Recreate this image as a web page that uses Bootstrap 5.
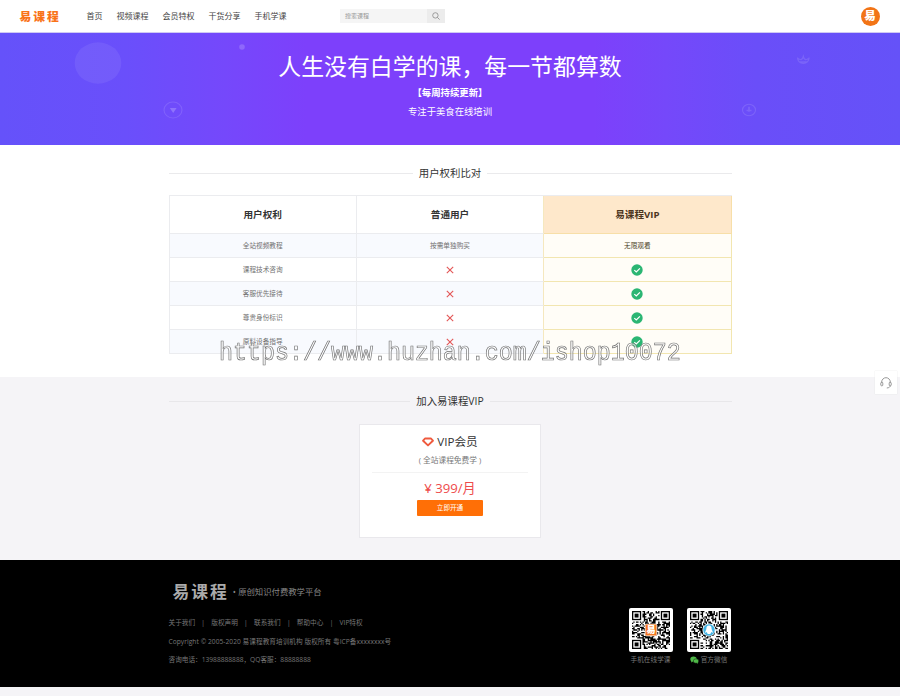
<!DOCTYPE html>
<html lang="zh-CN">
<head>
<meta charset="utf-8">
<meta name="viewport" content="width=device-width, initial-scale=1">
<title>易课程 - 会员特权</title>
<link href="https://cdn.jsdelivr.net/npm/bootstrap@5.3.0/dist/css/bootstrap.min.css" rel="stylesheet">
<style>
body{font-family:"Open Sans","Noto Sans CJK SC",sans-serif;background:#f5f4f7;color:#333;font-size:8px;line-height:1;min-height:696px;overflow:hidden}
svg{display:block;flex:none}
.topbar{height:33px;padding:0 20.5px 0 19.5px;border-bottom:1px solid #cfc9f3}
.brand{font-size:11.8px;font-weight:900;letter-spacing:1.9px;color:#f97318;width:67px;padding-top:2px}
.topnav{gap:14px;font-size:8px;width:253.5px}
.topnav a,.links a{color:inherit;text-decoration:none;white-space:nowrap}
.topnav a{color:#444}
.search{width:105px;height:14px;background:#f5f5f5;font-size:6px;color:#999}
.search-text{padding-left:5px}
.search-btn{width:18px;background:#ececec}
.avatar{width:19px;height:19px;background:#f27416;font-size:11.5px;font-weight:900}
.hero{height:112px;background:linear-gradient(90deg,#6552fa 0,#6a4ffb 14%,#7548fb 25%,#7d40fb 34%,#7d40fb 66%,#7548fa 74%,#6a4ef9 84%,#6552f8 100%);color:#fff}
.hero-art{left:0;top:0}
.hero h1{font-size:22.9px;font-weight:400;line-height:24px;padding-top:22px;white-space:nowrap}
.hero-sub{font-size:9.4px;font-weight:700;line-height:12px;margin-top:8px}
.hero-note{font-size:9.35px;line-height:12px;margin-top:7px}
.wrap{width:563px}
.rights{height:232px;padding-top:22px;background:#fff}
.sect{font-size:10.4px;line-height:13px;gap:6px;white-space:nowrap}
.sect::before,.sect::after{content:"";flex:1;height:1px;background:#eaeaec}
.compare{margin-top:15px;table-layout:fixed;width:563px;height:159px;border-collapse:separate;border-spacing:0;border:0 solid #ebecef;border-width:1px 0 0 1px;text-align:center;font-size:6.65px;color:#707070}
.compare th,.compare td{border:0 solid #ebecef;border-width:0 1px 1px 0;padding:1px 0 0;vertical-align:middle;height:24px}
.compare th{height:38px;font-size:9.6px;color:#333;font-weight:700;padding:0}
.compare th:nth-child(2),.compare td:nth-child(2){border-right-color:#f5e8bf}
.compare tbody tr:nth-child(odd) td{background:#f8fafe}
.compare tbody tr td.vip{background:#fffdf7;border-color:#f2e6b0;color:#4d4428}
.compare th.vip{background:#fee8cb;border-color:#f7dfa8;color:#4b341d}
.compare svg{margin:-1px auto 0}
.join{height:183px;padding-top:18px}
.join .sect::before,.join .sect::after{background:#e8e7ea}
.plan{width:182px;height:114px;margin-top:16px;border:1px solid #e9e8ec;background:#fff}
.plan-name{font-size:11.6px;line-height:14px;margin-top:10px;gap:3px}
.plan-desc{font-size:7.7px;line-height:10px;margin-top:6px;color:#777}
.plan-line{width:156px;height:1px;background:#f3f3f3;margin-top:7px}
.plan-price{font-size:13.2px;line-height:16px;margin-top:7px;color:#ee4b4b}
.plan-btn{width:66px;height:16px;background:#ff6f06;border-radius:1px;margin-top:4px;font-size:6.6px;color:#fff;padding:0;border:0}
.foot{height:127px;background:#000;color:#777;font-size:6.65px;white-space:nowrap}
.foot-logo{font-size:16.8px;font-weight:700;letter-spacing:2px;color:#aaa;line-height:20px}
.foot-brand{padding:22px 0 0 4px}
.slogan{font-size:8.35px;color:#888;padding-top:1px}
.links{margin-top:16px;line-height:9px}
.links span{width:16.2px;text-align:center}
.foot p{margin:0;line-height:9px}
.copy{padding-top:10px;letter-spacing:.04px}
.phone{padding-top:9px}
.codes{gap:14px;padding-top:48px;margin-right:1px}
.qr{width:44px;height:44px;background:#fff;border-radius:2px;padding:3px}
.qr-cap{margin-top:4px;line-height:8px;gap:2px}
.watermark{left:215px;top:330px;z-index:3;pointer-events:none;opacity:.99;will-change:transform}
.service{left:875px;top:371px;width:22px;height:23px;background:#fff;z-index:3;box-shadow:0 0 1px #ddd}
</style>
<script src="https://cdn.jsdelivr.net/npm/bootstrap@5.3.0/dist/js/bootstrap.bundle.min.js"></script>
</head>
<body class="position-relative">
<header class="topbar bg-white d-flex align-items-center">
  <div class="brand">易课程</div>
  <nav class="topnav d-flex"><a href="#">首页</a><a href="#">视频课程</a><a href="#">会员特权</a><a href="#">干货分享</a><a href="#">手机学课</a></nav>
  <div class="search d-flex">
    <div class="search-text flex-fill d-flex align-items-center">搜索课程</div>
    <div class="search-btn d-flex align-items-center justify-content-center">
      <svg width="8" height="8" viewBox="0 0 8 8" fill="none" stroke="#888" stroke-width=".8"><circle cx="3.4" cy="3.4" r="2.7"/><path d="M5.4 5.4 7.6 7.6"/></svg>
    </div>
  </div>
  <div class="avatar rounded-circle text-white d-flex align-items-center justify-content-center ms-auto">易</div>
</header>

<section class="hero position-relative text-center">
  <svg class="hero-art position-absolute" width="900" height="112" viewBox="0 33 900 112" fill="none">
    <ellipse cx="98" cy="63" rx="23.3" ry="20.7" fill="#fff" fill-opacity=".07"/>
    <circle cx="242" cy="47" r="2.8" fill="#fff" fill-opacity=".18"/>
    <g stroke="#fff" stroke-opacity=".12" stroke-width="1.1">
      <ellipse cx="173" cy="110" rx="9" ry="8"/>
      <ellipse cx="749" cy="110" rx="6.5" ry="5.7"/>
      <path d="M749 106.8v5M746.5 110.5h5" stroke-width="1.7"/>
      <path d="M797.500 57.500c.3 4 1.700 5.800 5.800 5.800s5.500-1.800 5.800-5.800M798 58.500c3 2 4.500 1 5.300-2 .8 3 2.300 4 5.300 2M799.500 61.800h7.600" stroke-width="1.3"/>
    </g>
    <path d="M169.800 108h6.800l-3.400 5z" fill="#fff" fill-opacity=".22"/>
  </svg>
  <h1 class="m-0">人生没有白学的课，每一节都算数</h1>
  <div class="hero-sub">【每周持续更新】</div>
  <div class="hero-note">专注于美食在线培训</div>
</section>

<main>
  <section class="rights">
    <div class="wrap mx-auto">
      <div class="sect d-flex align-items-center">用户权利比对</div>
      <table class="compare">
        <thead><tr><th>用户权利</th><th>普通用户</th><th class="vip">易课程VIP</th></tr></thead>
        <tbody id="rows"><tr><td>全站视频教程</td><td>按需单独购买</td><td class="vip">无限观看</td></tr></tbody>
      </table>
    </div>
  </section>
  <section class="join">
    <div class="wrap mx-auto">
      <div class="sect d-flex align-items-center">加入易课程VIP</div>
      <div class="plan mx-auto d-flex flex-column align-items-center">
        <div class="plan-name d-flex align-items-center">
          <svg width="12" height="10" viewBox="0 0 12 10" fill="none" stroke="#ef5a3e" stroke-width="1.900" stroke-linejoin="round"><path d="M3 1.500h6l1.900 2.200L6 8.400 1.100 3.700z"/></svg>
          <span>VIP会员</span>
        </div>
        <div class="plan-desc">( 全站课程免费学 )</div>
        <div class="plan-line"></div>
        <div class="plan-price">¥ 399/月</div>
        <button class="plan-btn" type="button">立即开通</button>
      </div>
    </div>
  </section>
</main>

<footer class="foot">
  <div class="wrap mx-auto d-flex">
    <div class="flex-fill">
      <div class="foot-brand d-flex align-items-center"><span class="foot-logo">易课程</span><span class="slogan ms-1">•&nbsp;原创知识付费教学平台</span></div>
      <div class="links d-flex"><a href="#">关于我们</a><span>|</span><a href="#">版权声明</a><span>|</span><a href="#">联系我们</a><span>|</span><a href="#">帮助中心</a><span>|</span><a href="#">VIP特权</a></div>
      <p class="copy">Copyright © 2005-2020 易课程教育培训机构 版权所有 粤ICP备xxxxxxxx号</p>
      <p class="phone">咨询电话：13988888888，QQ客服：88888888</p>
    </div>
    <div class="codes d-flex">
      <div><div class="qr" data-seed="7" data-kind="app"></div><div class="qr-cap d-flex justify-content-center">手机在线学课</div></div>
      <div><div class="qr" data-seed="31" data-kind="qq"></div><div class="qr-cap d-flex justify-content-center"><svg width="9" height="8" viewBox="0 0 9 8" fill="#4fb848"><ellipse cx="3.500" cy="3" rx="3.200" ry="2.600"/><path d="M1.500 4.500 1 6.500l2-1z"/><ellipse cx="6" cy="5" rx="2.700" ry="2.200" stroke="#000" stroke-width=".4"/><path d="m6.500 6.800 1.600.9-.3-1.600z"/></svg>官方微信</div></div>
    </div>
  </div>
</footer>

<aside class="service position-absolute d-flex align-items-center justify-content-center">
  <svg width="12" height="12" viewBox="0 0 12 12" fill="none" stroke="#999" stroke-width="1"><path d="M1.700 6V5a4.300 4.300 0 0 1 8.600 0v1M10.300 8.500c0 1.500-1.300 2.300-3.500 2.500"/><rect x=".8" y="5.300" width="2" height="3.500" rx=".8"/><rect x="9.200" y="5.300" width="2" height="3.500" rx=".8"/></svg>
</aside>
<svg class="watermark position-absolute" width="475" height="42" viewBox="0 0 475 42">
  <text transform="translate(4 29.500) scale(1 1.080)" font-family="Liberation Mono, monospace" font-size="23.330" fill="#fff" fill-opacity=".6" stroke="#707070" stroke-width=".65">https://www.huzhan.com/ishop10072</text>
</svg>
<script>
const cross='<svg width="8" height="8" viewBox="0 0 8 8" stroke="#e35656" stroke-width="1.1"><path d="M.8.8l6.400 6.400M7.200.8.8 7.200"/></svg>';
const check='<svg width="12" height="12" viewBox="0 0 12 12" fill="none"><circle cx="6" cy="6" r="5.700" fill="#2bb673"/><path d="M3.300 6.100 5.300 8l3.600-3.600" stroke="#fff" stroke-width="1.200"/></svg>';
['课程技术咨询','客服优先接待','尊贵身份标识','原料设备指导'].forEach(t=>{
  document.getElementById('rows').insertAdjacentHTML('beforeend',`<tr><td>${t}</td><td>${cross}</td><td class="vip">${check}</td></tr>`);
});
/* Module grid with three finder squares and a centre badge */
document.querySelectorAll('.qr').forEach(el=>{
  let s=+el.dataset.seed,d='';const n=29;
  const rnd=()=>(s=(s*48271)%2147483647)/2147483647;
  for(let i=0;i<20;i++)rnd();
  for(let y=0;y<n;y++)for(let x=0;x<n;x++){
    const v=rnd();
    if((x<8&&y<8)||(x>20&&y<8)||(x<8&&y>20))continue;
    if(v<.52)d+=`M${x} ${y}h1v1h-1z`;
  }
  const f=(x,y)=>`<rect x="${x+.5}" y="${y+.5}" width="6" height="6" fill="none" stroke="#000"/><rect x="${x+2}" y="${y+2}" width="3" height="3"/>`;
  const badge=el.dataset.kind==='app'
   ?'<rect x="10" y="10" width="9" height="9" rx="1" fill="#f47721" stroke="#fff" stroke-width=".6"/><text x="14.500" y="17" text-anchor="middle" font-size="7" font-weight="900" fill="#fff">易</text>'
   :'<circle cx="14.500" cy="14.500" r="4.700" fill="#43b4e4" stroke="#fff" stroke-width=".6"/><path d="M14.500 11c-1.600 0-2 1.300-2 2.500 0 1-1.100 2-.9 3.200l1.100-.6.8 1.400h2l.8-1.400 1.100.6c.2-1.200-.9-2.200-.9-3.200 0-1.200-.4-2.500-2-2.500z" fill="#fff"/>';
  el.innerHTML=`<svg width="38" height="38" viewBox="0 0 29 29"><path d="${d}"/>${f(0,0)}${f(22,0)}${f(0,22)}${badge}</svg>`;
});
</script>
</body>
</html>
